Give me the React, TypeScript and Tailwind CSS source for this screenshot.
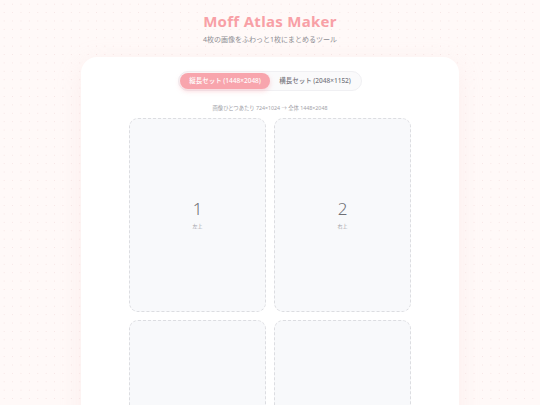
const tiles = [
  { n: 1, label: "左上" },
  { n: 2, label: "右上" },
  { n: 3, label: "左下" },
  { n: 4, label: "右下" },
];

export default function App() {
  return (
    <div
      className="min-h-screen bg-[#fff9f8] bg-[radial-gradient(#f6e4e4_0.5px,transparent_0.8px)] bg-[size:8.4px_8.4px] pb-10 text-center"
      style={{ fontFamily: '"Noto Sans", "Noto Sans CJK JP", sans-serif' }}
    >
      <header className="pt-[9px]">
        <h1 className="text-[15px] font-bold leading-[24px] tracking-[0.3px] text-[#f8a0a6]">
          Moff Atlas Maker
        </h1>
        <p className="mt-[1px] text-[7px] leading-[12px] text-[#8d8d93]">
          4枚の画像をふわっと1枚にまとめるツール
        </p>
      </header>

      <main className="mx-auto mt-[11px] w-[378px] rounded-[16px] bg-white px-[48px] pt-[14px] pb-10 shadow-[0_6px_24px_rgba(240,200,200,0.22)]">
        <div className="mx-auto flex w-[184px] items-center rounded-full border border-[#f0f0f3] bg-[#fafafb] p-[1px]">
          <button className="h-[16px] w-[90px] rounded-full bg-[#f8a5ad] text-[6.5px] font-medium text-white shadow-[0_2px_5px_rgba(248,165,173,0.45)]">
            縦長セット (1448×2048)
          </button>
          <button className="h-[16px] flex-1 text-[6.5px] font-medium text-[#76767d]">
            横長セット (2048×1152)
          </button>
        </div>

        <p className="mt-[13px] text-[5.3px] leading-[8px] text-[#a2a2a8]">
          画像ひとつあたり 724×1024 → 全体 1448×2048
        </p>

        <div className="mt-[6px] grid grid-cols-2 gap-[8px]">
          {tiles.map((t) => (
            <div
              key={t.n}
              className="flex h-[194px] flex-col items-center justify-center rounded-[9px] border-[1.5px] border-dashed border-[#dcdde1] bg-[#f8f9fb]"
            >
              <span className="text-[17px] font-light leading-[20px] text-[#6f6f75]">{t.n}</span>
              <span className="mt-[4px] text-[5px] text-[#a0a0a6]">{t.label}</span>
            </div>
          ))}
        </div>
      </main>
    </div>
  );
}
